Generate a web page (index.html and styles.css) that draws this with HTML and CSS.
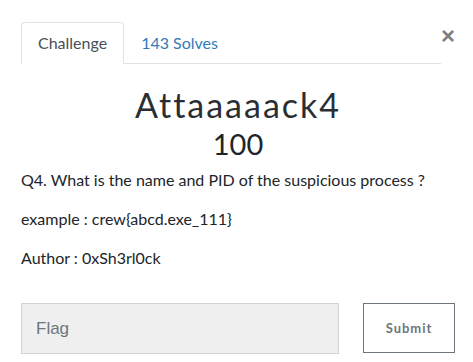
FILE: index.html
```html
<!DOCTYPE html>
<html lang="en">
<head>
    <meta name="viewport" content="width=device-width, initial-scale=1.0">
    <link rel="stylesheet" href="styles.css">
</head>
<body>
    <div class="modal">
        <div class="head">
            <ul class="tabs">
                <li class="tab active">Challenge</li>
                <li class="tab">143 Solves</li>
            </ul>
            <button type="button" class="close">&times;</button>
        </div>
        <h2 class="name">Attaaaaack4</h2>
        <h3 class="value">100</h3>
        <div class="desc">
            <p>Q4. What is the name and PID of the suspicious process ?</p>
            <p>example : crew{abcd.exe_111}</p>
            <p>Author : 0xSh3rl0ck</p>
        </div>
        <div class="submit-row">
            <input type="text" class="flag" placeholder="Flag">
            <button type="button" class="submit">Submit</button>
        </div>
    </div>
</body>
</html>
```

FILE: styles.css
```css
* {
    box-sizing: border-box;
}

body {
    margin: 0;
    background: #fff;
    font-family: Lato, "Noto Sans", sans-serif;
    font-size: 16px;
    color: #212529;
}

div.modal {
    padding: 22px 18px 0 21px;
}

div.head {
    display: flex;
    align-items: flex-start;
}

ul.tabs {
    flex: 1;
    display: flex;
    margin: 0;
    padding: 0;
    list-style: none;
    border-bottom: 1px solid #dee2e6;
}

li.tab {
    padding: 8px 16px;
    line-height: 24px;
    margin-bottom: -1px;
    border: 1px solid transparent;
    border-radius: 4px 4px 0 0;
    color: #337ab7;
}

li.tab.active {
    color: #495057;
    border-color: #dee2e6 #dee2e6 #fff;
    background: #fff;
}

button.close {
    width: 14px;
    margin-top: 2px;
    padding: 0;
    border: none;
    background: none;
    font-family: "Liberation Sans", sans-serif;
    font-size: 24px;
    font-weight: 700;
    line-height: 1;
    color: #000;
    opacity: 0.5;
    text-align: right;
}

h2.name {
    margin: 21px 0 0;
    text-align: center;
    font-weight: 400;
    font-size: 34px;
    letter-spacing: 2px;
    line-height: 40px;
    color: #2a2e33;
}

h3.value {
    margin: 2px 0 0;
    text-align: center;
    font-weight: 400;
    font-size: 29px;
    line-height: 34px;
}

div.desc {
    margin-top: 7px;
}

div.desc p {
    margin: 0 0 15px;
    line-height: 24px;
}

div.submit-row {
    display: flex;
    gap: 24px;
    margin-top: 33px;
}

input.flag {
    width: 318px;
    height: 51px;
    padding: 0 14px;
    border: 1px solid #ced4da;
    background: #efefef;
    font-family: "Liberation Sans", sans-serif;
    font-size: 17px;
}

input.flag::placeholder {
    color: #6c757d;
}

button.submit {
    width: 92px;
    height: 50px;
    border: 1px solid #6c757d;
    background: #fff;
    color: #6c757d;
    font-family: Lato, sans-serif;
    font-weight: 700;
    font-size: 13px;
    letter-spacing: 1px;
}
```
